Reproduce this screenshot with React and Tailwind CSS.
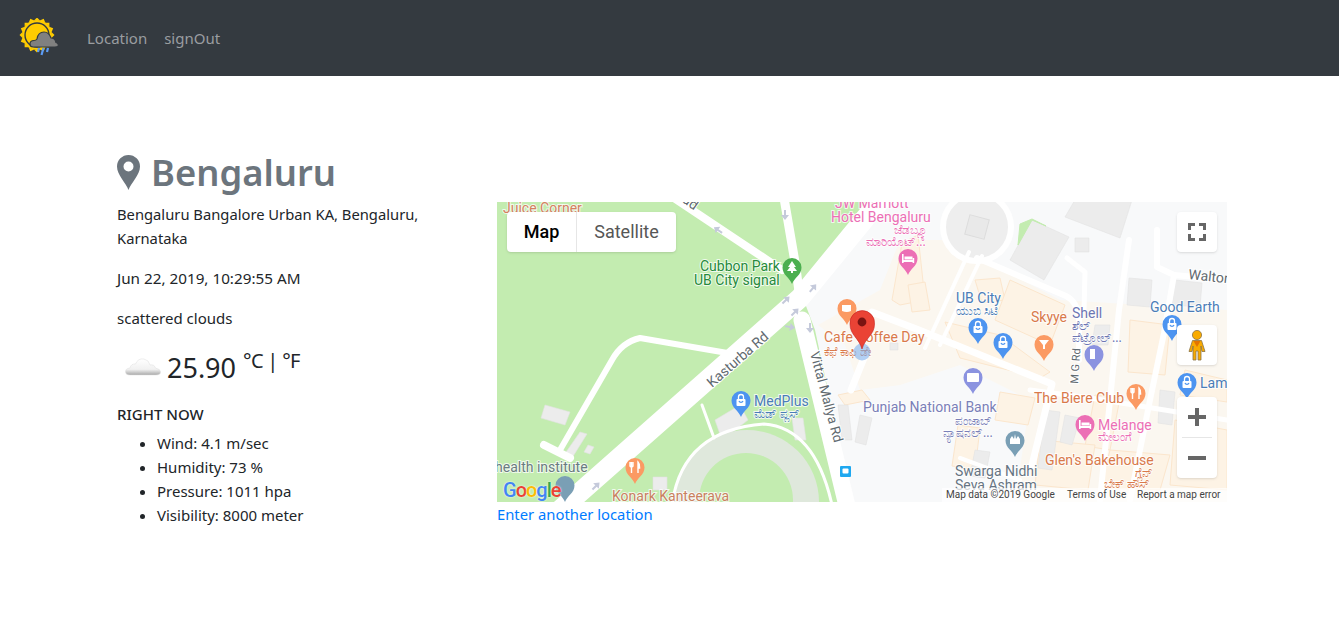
import { Fragment } from "react";

const ROADS = [
  // park paths and main roads, page coordinates
  { d: "M674 198 L782 270", w: 8 },
  { d: "M784 198 L796 268 L800 300", w: 9 },
  { d: "M560 510 L800 298 L872 210 L890 190", w: 20 },
  { d: "M802 320 L848 510", w: 17 },
  { d: "M560 450 L612 360 Q622 342 640 338 L745 356", w: 6 },
  { d: "M544 445 L570 458", w: 8 },
  { d: "M702 405 L714 438", w: 3 },
  { d: "M672 505 Q682 430 764 424 Q815 428 832 505", w: 3 },
  { d: "M969 252 L925 348", w: 4 },
  { d: "M982 256 L940 345", w: 4 },
  { d: "M977 258 L1066 296 Q1078 302 1079 320 L1079 360", w: 6 },
  { d: "M872 312 L919 330 L1052 384 L1032 465", w: 7 },
  { d: "M864 358 L851 390", w: 7 },
  { d: "M1067 258 L1085 272 L1084 310", w: 5 },
  { d: "M1129 240 L1119 310 L1100 500", w: 6 },
  { d: "M1157 230 L1157 267 L1174 275 L1164 333 L1150 400 L1130 500", w: 6 },
  { d: "M1174 275 L1227 280", w: 6 },
  { d: "M1030 390 L1090 398 L1227 420", w: 5 },
  { d: "M960 458 L1020 480", w: 4 },
];

const BLOCKS = [
  "M892 300 L902 243 L918 235 L925 300 L900 305 Z",
  "M908 285 L925 282 L930 310 L912 312 Z",
  "M975 280 L1000 278 L1005 300 L982 303 Z",
  "M1010 280 L1065 305 L1050 345 L995 320 Z",
  "M945 322 L1000 335 L1050 372 L1040 378 L960 358 Z",
  "M1130 320 L1170 325 L1165 375 L1128 372 Z",
  "M1000 392 L1035 398 L1028 425 L995 420 Z",
  "M958 425 L980 428 L975 470 L952 466 Z",
  "M1095 395 L1120 398 L1110 450 L1085 446 Z",
  "M1110 450 L1170 455 L1160 490 L1100 488 Z",
  "M1040 440 L1095 445 L1088 490 L1035 485 Z",
  "M1175 420 L1227 430 L1227 490 L1170 485 Z",
  "M1185 370 L1227 380 L1227 402 L1180 395 Z",
  "M838 395 L862 390 L870 400 L845 405 Z",
];

const GREYS = [
  "M1010 260 L1032 220 L1069 237 L1044 280 Z",
  "M1065 217 L1075 200 L1132 200 L1120 238 Z",
  "M1075 238 L1089 238 L1089 252 L1075 252 Z",
  "M1129 278 L1152 280 L1150 307 L1127 305 Z",
  "M1175 280 L1202 283 L1200 307 L1172 305 Z",
  "M1095 325 L1110 325 L1108 345 L1092 345 Z",
  "M838 405 L848 405 L852 440 L842 440 Z",
  "M860 415 L872 418 L866 445 L855 442 Z",
  "M1045 410 L1060 412 L1052 470 L1038 468 Z",
  "M1065 415 L1080 418 L1072 445 L1060 442 Z",
  "M975 450 L990 452 L985 478 L970 476 Z",
  "M1160 390 L1175 392 L1172 425 L1158 423 Z",
  "M890 343 L898 343 L898 350 L890 350 Z",
  "M545 405 L570 412 L565 425 L541 418 Z",
  "M580 432 L587 434 L572 458 L564 455 Z",
  "M588 445 L594 447 L590 454 L584 452 Z",
  "M715 420 L740 405 L748 420 L722 440 Z",
  "M653 477 L667 477 L667 490 L653 490 Z",
  "M792 418 L803 418 L806 440 L795 440 Z",
];

const LABELS = [
  ["Juice Corner", 503, 213, "#d4815f", 14],
  ["JW Marriott", 835, 208, "#ec6fb5", 14],
  ["Hotel Bengaluru", 831, 222, "#ec6fb5", 14],
  ["Cubbon Park", 700, 271, "#268a3c", 14],
  ["UB City signal", 694, 285, "#268a3c", 14],
  ["MedPlus", 754, 406, "#4b7db8", 14],
  ["health institute", 495, 472, "#697c80", 14],
  ["Konark Kanteerava", 612, 501, "#c9805f", 14],
  ["Cafe Coffee Day", 824, 342, "#d9794b", 14],
  ["UB City", 956, 303, "#4b7db8", 14],
  ["Skyye", 1031, 322, "#d9794b", 14],
  ["Shell", 1072, 318, "#6d76b3", 14],
  ["Good Earth", 1150, 312, "#4b7db8", 14],
  ["Lam", 1200, 388, "#4b7db8", 14],
  ["Punjab National Bank", 863, 412, "#7a80b8", 14],
  ["The Biere Club", 1034, 403, "#d9794b", 14],
  ["Melange", 1098, 430, "#ec6fb5", 14],
  ["Glen's Bakehouse", 1045, 465, "#d9794b", 14],
  ["Swarga Nidhi", 955, 476, "#667482", 14],
  ["Seva Ashram", 955, 490, "#667482", 14],
];

const KANNADA = [
  ["ಜೆಡಬ್ಲ್ಯೂ", 894, 234, "#ec6fb5"],
  ["ಮಾರಿಯೊಟ್...", 866, 246, "#ec6fb5"],
  ["ಮೆಡ್ ಪ್ಲಸ್", 754, 418, "#4b7db8"],
  ["ಕೆಫೆ ಕಾಫಿ ಡೇ", 824, 356, "#d9794b"],
  ["ಯುಬಿ ಸಿಟಿ", 956, 315, "#4b7db8"],
  ["ಶೆಲ್", 1072, 330, "#6d76b3"],
  ["ಪೆಟ್ರೋಲ್...", 1072, 342, "#6d76b3"],
  ["ಪಂಜಾಬ್", 955, 425, "#7a80b8"],
  ["ನ್ಯಾಷನಲ್...", 943, 437, "#7a80b8"],
  ["ಮೇಲಂಗೆ", 1098, 441, "#ec6fb5"],
  ["ಗ್ಲೆನ್", 1135, 477, "#d9794b"],
  ["ಬೇಕ್ ಹೌಸ್", 1104, 488, "#d9794b"],
];

const ROAD_NAMES = [
  ["Road", 668, 192, 35, 14],
  ["Kasturba Rd", 712, 388, -41, 14],
  ["Vittal Mallya Rd", 810, 353, 75, 13.5],
  ["M G Rd", 1078, 384, -86, 11],
  ["Walton Rd", 1188, 279, 6, 14],
];

// tip of the pin is at x,y
function Pin({ x, y, color, children }) {
  return (
    <g transform={`translate(${x} ${y})`}>
      <path d="M0 0 C-2 -6 -9.5 -9 -9.5 -16.5 A9.5 9.5 0 1 1 9.5 -16.5 C9.5 -9 2 -6 0 0 Z" fill={color} />
      {children}
    </g>
  );
}

const Bag = () => (
  <g fill="none" stroke="#fff" strokeWidth="1.3">
    <rect x="-4.5" y="-18" width="9" height="7" rx="1" fill="#fff" stroke="none" />
    <path d="M-2.5 -18 V-20 A2.5 2.5 0 0 1 2.5 -20 V-18" />
    <path d="M-2 -16 A2.2 2.2 0 0 0 2 -16" stroke="#4d94f0" />
  </g>
);

const Food = () => (
  <g stroke="#fff" strokeWidth="1.4" fill="none">
    <path d="M-3.5 -22 V-11 M-5 -22 V-18 Q-3.5 -16 -2 -18 V-22" />
    <path d="M3 -11 V-22 Q5 -20 4.6 -16 L3 -16" fill="#fff" />
  </g>
);

const Bed = () => (
  <g fill="#fff">
    <rect x="-6" y="-21" width="1.6" height="9" />
    <rect x="-6" y="-15" width="12" height="2" />
    <rect x="4.6" y="-17" width="1.6" height="5" />
    <rect x="-3.5" y="-18.5" width="8" height="3" />
  </g>
);

function MapArt() {
  return (
    <svg viewBox="497 202 730 300" className="w-full h-full block font-['Roboto',sans-serif]">
      <rect x="497" y="202" width="730" height="300" fill="#f8f9fa" />
      <path d="M497 202 H848 L800 290 L815 330 L852 502 H497 Z" fill="#c3ecb0" />
      <path d="M800 202 H885 L812 290 Z" fill="#c3ecb0" />
      {/* built up area */}
      <path d="M818 325 L880 290 L900 240 L945 240 L1060 300 L1227 310 V502 H1015 L1030 400 L960 365 L900 385 L860 390 L845 345 Z" fill="#fbf7f0" />
      {BLOCKS.map((d, i) => (
        <path key={i} d={d} fill="#fdf3e5" stroke="#fbe6cd" strokeWidth="1" />
      ))}
      {GREYS.map((d, i) => (
        <path key={i} d={d} fill="#ececec" stroke="#e3e3e3" strokeWidth="0.6" />
      ))}

      {/* stadium */}
      <circle cx="747" cy="502" r="72" fill="#dfe8dc" />
      <circle cx="746" cy="500" r="47" fill="#c3ecb0" />

      {/* round building */}
      <path d="M1020 224 L1032 219 L1046 226 L1032 220 L1018 245 Z" fill="#c3ecb0" stroke="#c3ecb0" />
      <circle cx="977" cy="227" r="34" fill="#eeeeee" stroke="#fff" strokeWidth="6" />
      <rect x="967" y="217" width="20" height="20" fill="#e9e9e9" stroke="#dcdcdc" transform="rotate(15 977 227)" />

      {ROADS.map((r, i) => (
        <path key={i} d={r.d} fill="none" stroke="#fff" strokeWidth={r.w} strokeLinecap="round" strokeLinejoin="round" />
      ))}

      {/* one way arrows */}
      {[
        [785, 215, 180], [718, 230, -55], [813, 288, 40], [795, 312, 45], [790, 327, 100],
        [810, 328, 180], [596, 486, 45], [786, 300, 45],
      ].map(([x, y, a], i) => (
        <path key={i} transform={`translate(${x} ${y}) rotate(${a})`} d="M0 -5 L4 0 L1 0 L1 5 L-1 5 L-1 0 L-4 0 Z" fill="#c5cadb" />
      ))}

      {LABELS.map(([t, x, y, fill, size]) => (
        <text key={t} x={x} y={y} fill={fill} fontSize={size} stroke="#fff" strokeWidth="2" strokeOpacity="0.75" paintOrder="stroke">
          {t}
        </text>
      ))}
      {KANNADA.map(([t, x, y, fill]) => (
        <text key={t} x={x} y={y} fill={fill} fontSize="12" fontFamily="'Noto Sans','Roboto',sans-serif" stroke="#fff" strokeWidth="2" strokeOpacity="0.75" paintOrder="stroke">
          {t}
        </text>
      ))}
      {ROAD_NAMES.map(([t, x, y, a, size]) => (
        <text key={t} transform={`translate(${x} ${y}) rotate(${a})`} fill="#616a70" fontSize={size} stroke="#fff" strokeWidth="2" paintOrder="stroke">
          {t}
        </text>
      ))}

      <Pin x={792} y={284} color="#4caf50">
        <path d="M0 -23 L4 -17 H2 L5 -13 H1 V-11 H-1 V-13 H-5 L-2 -17 H-4 Z" fill="#fff" />
      </Pin>
      <Pin x={908} y={275} color="#ec6fb5"><Bed /></Pin>
      <Pin x={741} y={417} color="#4d94f0"><Bag /></Pin>
      <Pin x={635} y={484} color="#fb9a63"><Food /></Pin>
      <Pin x={847} y={325} color="#fb9a63">
        <path d="M-5 -20 H4 V-14 Q0 -12 -5 -14 Z" fill="#fff" />
      </Pin>
      <Pin x={978} y={344} color="#4d94f0"><Bag /></Pin>
      <Pin x={1003} y={359} color="#4d94f0"><Bag /></Pin>
      <Pin x={1044} y={361} color="#fb9a63">
        <path d="M-5 -21 H5 L1 -16 V-12 H-1 V-16 Z" fill="#fff" />
      </Pin>
      <Pin x={1094} y={371} color="#8b93e0">
        <rect x="-4" y="-22" width="5" height="10" fill="#fff" />
      </Pin>
      <Pin x={1172} y={341} color="#4d94f0"><Bag /></Pin>
      <Pin x={1187} y={399} color="#4d94f0"><Bag /></Pin>
      <Pin x={973} y={394} color="#8b93e0">
        <rect x="-6" y="-21" width="12" height="9" rx="1" fill="#fff" />
      </Pin>
      <Pin x={1085} y={441} color="#ec6fb5"><Bed /></Pin>
      <Pin x={1136} y={410} color="#fb9a63"><Food /></Pin>
      <Pin x={1015} y={457} color="#7a9fb5">
        <path d="M-5 -13 V-18 L-3 -21 L-1 -18 L0 -23 L1 -18 L3 -21 L5 -18 V-13 Z" fill="#fff" />
      </Pin>
      <Pin x={565} y={502} color="#7a9fb5" />
      <circle cx="862" cy="352" r="8.5" fill="#7fb0ee" opacity="0.6" />

      {/* bus stop */}
      <rect x="840" y="466" width="11" height="11" rx="1" fill="#1fa8f0" />
      <rect x="842.5" y="468.5" width="6" height="5" rx="1" fill="#fff" />

      {/* selected place */}
      <path d="M862 349 C859 338 850 335 850 324 A12.3 12.3 0 1 1 874.5 324 C874.5 335 865 338 862 349 Z" fill="#ea4335" stroke="#c5221f" strokeWidth="0.6" />
      <circle cx="862" cy="322" r="4.4" fill="#7a1412" />
    </svg>
  );
}

function Logo() {
  const teeth = Array.from({ length: 16 }, (_, i) => i * 22.5);
  return (
    <svg viewBox="0 0 40 40" className="w-[40px] h-[40px] block">
      <g transform="translate(18 17)">
        {teeth.map(a => (
          <path key={a} transform={`rotate(${a})`} d="M-3 -14.5 L0 -17.5 L3 -14.5 Z" fill="#ffcc00" />
        ))}
        <circle r="15" fill="#ffcc00" />
        <circle r="12" fill="#ffcc00" stroke="#343a40" strokeWidth="1.4" />
      </g>
      <path d="M14 29 Q11 29 11 26 Q11 22.5 15 22.5 Q17 22.5 18 21 Q19 14 25 14 Q30 14 32 20 Q36 20 37 24.5 Q40 25.5 39 28 Q38.5 29 36 29 Z" fill="#808080" stroke="#343a40" strokeWidth="1.2" />
      <path d="M20 30 L19 34 M24.5 30 L22.5 37 M29 30 L28 34" stroke="#5b9bf5" strokeWidth="2.2" />
    </svg>
  );
}

function Fullscreen() {
  return (
    <svg viewBox="0 0 18 18" className="w-[18px] h-[18px]">
      <path d="M1.5 7 V1.5 H7 M11 1.5 H16.5 V7 M16.5 11 V16.5 H11 M7 16.5 H1.5 V11" fill="none" stroke="#666" strokeWidth="3" />
    </svg>
  );
}

function Pegman() {
  return (
    <svg viewBox="0 0 18 31" className="w-[18px] h-[31px]">
      <circle cx="9" cy="5" r="4.6" fill="#f9ab00" stroke="#8a7448" strokeWidth="0.8" />
      <path d="M4.5 10.5 H13.5 L17 21.5 H14 L13 16 V30 H10 V21 H8 V30 H5 V16 L4 21.5 H1 Z" fill="#f9ab00" stroke="#8a7448" strokeWidth="0.8" strokeLinejoin="round" />
      <path d="M5.5 11 L9 17 L12.5 11 Z" fill="#e37400" />
    </svg>
  );
}

function CloudIcon() {
  return (
    <svg viewBox="0 0 36 24" className="w-[36px] h-[24px]">
      <defs>
        <linearGradient id="cloudfill" x1="0" y1="0" x2="0" y2="1">
          <stop offset="0" stopColor="#ffffff" />
          <stop offset="0.65" stopColor="#f1f1f1" />
          <stop offset="1" stopColor="#a9a9a9" />
        </linearGradient>
      </defs>
      <path d="M5 21 Q0.5 21 0.5 17.5 Q0.5 14.5 5 14 Q6 9.5 10.5 10 Q13 4 19 5 Q24 6 25 11 Q29 10 30.5 14 Q35.5 15 35.5 18 Q35.5 21 31 21 Z" fill="url(#cloudfill)" stroke="#dcdcdc" strokeWidth="0.5" />
    </svg>
  );
}

export default function App() {
  const stats = ["Wind: 4.1 m/sec", "Humidity: 73 %", "Pressure: 1011 hpa", "Visibility: 8000 meter"];

  return (
    <div className="min-h-screen bg-white text-[#212529] font-['Noto_Sans',sans-serif] text-[15px] leading-6">
      <nav className="h-[76px] bg-[#343a40] flex items-center pl-[19px]">
        <Logo />
        <a className="ml-[28px] text-[#9a9da0] text-[15px]">Location</a>
        <a className="ml-[17px] text-[#9a9da0] text-[15px]">signOut</a>
      </nav>

      <main className="pl-[117px] pr-[112px] pt-[70px]">
        <h1 className="h-[52px] mb-[4px] flex items-center gap-[11px] text-[#6c757d] text-[36.4px] font-semibold leading-none">
          <svg viewBox="0 0 23 35" className="w-[23px] h-[35px]">
            <path fillRule="evenodd" d="M11.5 35 C9 28 0 20 0 11.5 A11.5 11.5 0 0 1 23 11.5 C23 20 14 28 11.5 35 Z M11.5 6.5 A5 5 0 1 0 11.5 16.5 A5 5 0 1 0 11.5 6.5 Z" fill="#6c757d" />
          </svg>
          Bengaluru
        </h1>

        <div className="flex">
          <div className="w-[380px] pr-[60px] shrink-0">
            <p className="mb-4 text-[14.75px]">Bengaluru Bangalore Urban KA, Bengaluru, Karnataka</p>
            <p className="mb-4 text-[15.25px]">Jun 22, 2019, 10:29:55 AM</p>
            <p className="mb-4">scattered clouds</p>

            <div className="h-[40px] mb-4 flex items-center pl-[8px]">
              <CloudIcon />
              <span className="ml-[6px] text-[27px] mt-[4px]">25.90</span>
              <span className="ml-[7px] text-[20px] mb-[10px] tracking-[-0.7px]">°C | °F</span>
            </div>

            <p className="mb-[5px] font-medium">RIGHT NOW</p>
            <ul className="list-disc pl-10">
              {stats.map(s => (
                <li key={s}>{s}</li>
              ))}
            </ul>
          </div>

          <div className="w-[730px]">
            <div className="relative h-[300px] overflow-hidden">
              <MapArt />

              <div className="absolute left-[10px] top-[10px] h-[40px] flex bg-white rounded-sm shadow font-['Roboto',sans-serif] text-[18px]">
                <div className="w-[70px] flex items-center justify-center text-black font-medium border-r border-[#e6e6e6]">Map</div>
                <div className="w-[99px] flex items-center justify-center text-[#565656]">Satellite</div>
              </div>

              <div className="absolute right-[10px] top-[10px] w-[40px] h-[40px] bg-white rounded-sm shadow flex items-center justify-center">
                <Fullscreen />
              </div>

              <div className="absolute right-[10px] top-[123px] w-[40px] h-[40px] bg-white rounded-sm shadow flex items-center justify-center">
                <Pegman />
              </div>

              <div className="absolute right-[10px] top-[195px] w-[40px] h-[81px] bg-white rounded-sm shadow flex flex-col items-center">
                <div className="h-[40px] flex items-center justify-center">
                  <svg viewBox="0 0 18 18" className="w-[18px] h-[18px]"><path d="M9 0 V18 M0 9 H18" stroke="#666" strokeWidth="4" /></svg>
                </div>
                <div className="w-[30px] h-px bg-[#e6e6e6]" />
                <div className="h-[40px] flex items-center justify-center">
                  <svg viewBox="0 0 18 18" className="w-[18px] h-[18px]"><path d="M0 9 H18" stroke="#666" strokeWidth="4" /></svg>
                </div>
              </div>

              <div className="absolute left-[6px] bottom-[2px] font-['Roboto',sans-serif] text-[20px] leading-none font-medium tracking-[-1px] [text-shadow:0_0_2px_#fff]">
                {[["G", "#4285f4"], ["o", "#ea4335"], ["o", "#fbbc05"], ["g", "#4285f4"], ["l", "#34a853"], ["e", "#ea4335"]].map(([c, col], i) => (
                  <Fragment key={i}>
                    <span style={{ color: col }}>{c}</span>
                  </Fragment>
                ))}
              </div>

              <div className="absolute right-0 bottom-0 w-[285px] h-[14px] bg-white/70 font-['Roboto',sans-serif] text-[10px] leading-[14px] text-[#444] flex pl-[4px]">
                <span className="w-[121px]">Map data ©2019 Google</span>
                <span className="w-[70px]">Terms of Use</span>
                <span>Report a map error</span>
              </div>
            </div>
            <a className="text-[#007bff] text-[14.8px]">Enter another location</a>
          </div>
        </div>
      </main>
    </div>
  );
}
